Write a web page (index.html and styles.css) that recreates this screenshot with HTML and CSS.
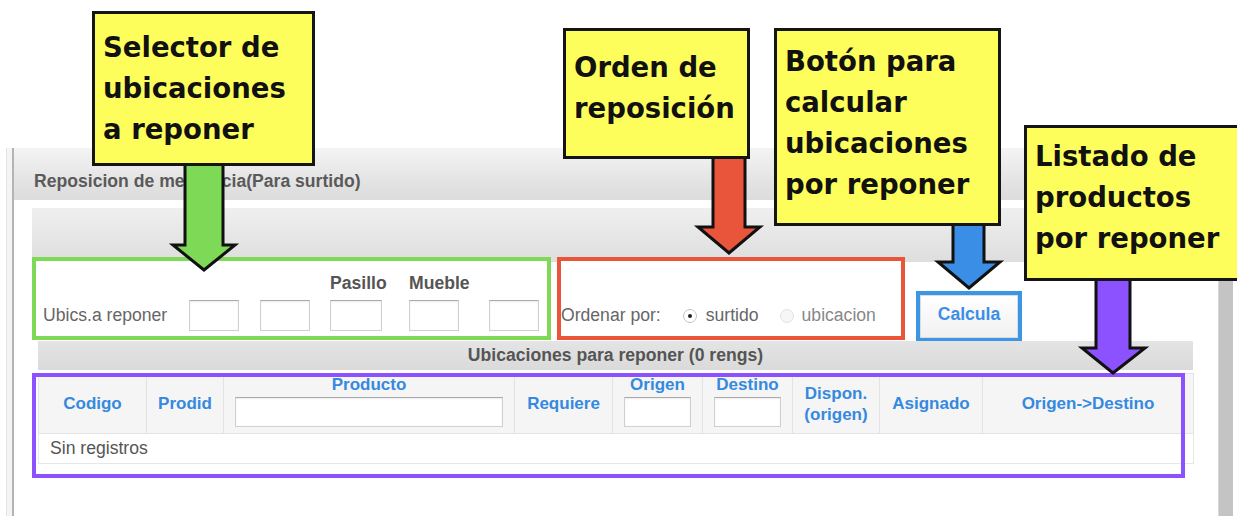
FILE: index.html
```html
<!DOCTYPE html>
<html lang="es">
<head>
    <meta charset="UTF-8">
    <title>Reposicion de mercancia</title>
    <link rel="stylesheet" href="styles.css">
</head>
<body>
    <div class="window">
        <div class="frame">
            <div class="win-title">Reposicion de mercancia(Para surtido)</div>
            <div class="win-body">
                <div class="content">
                    <div class="filter-panel">
                        <div class="filter-row">
                            <div class="hl hl-green ubics">
                                <span></span>
                                <span></span>
                                <span></span>
                                <span class="col-label">Pasillo</span>
                                <span class="col-label">Mueble</span>
                                <span></span>
                                <span class="ubics-label">Ubics.a reponer</span>
                                <input type="text">
                                <input type="text">
                                <input type="text" class="wide">
                                <input type="text">
                                <input type="text">
                            </div>
                            <div class="hl hl-red orden">
                                <span class="orden-label">Ordenar por:</span>
                                <span class="radio on"></span>
                                <span class="radio-text">surtido</span>
                                <span class="radio off"></span>
                                <span class="radio-text">ubicacion</span>
                            </div>
                            <div class="hl hl-blue calc">
                                <button type="button">Calcula</button>
                            </div>
                        </div>
                    </div>

                    <div class="list-panel">
                        <div class="list-title">Ubicaciones para reponer (0 rengs)</div>
                        <table class="grid">
                            <colgroup>
                                <col style="width:108px">
                                <col style="width:77px">
                                <col style="width:291px">
                                <col style="width:98px">
                                <col style="width:90px">
                                <col style="width:90px">
                                <col style="width:87px">
                                <col style="width:103px">
                                <col style="width:211px">
                            </colgroup>
                            <thead>
                                <tr>
                                    <th>Codigo</th>
                                    <th>Prodid</th>
                                    <th class="filter">Producto<input type="text" class="f-producto"></th>
                                    <th>Requiere</th>
                                    <th class="filter">Origen<input type="text" class="f-small"></th>
                                    <th class="filter">Destino<input type="text" class="f-small"></th>
                                    <th class="two-line">Dispon.<br>(origen)</th>
                                    <th>Asignado</th>
                                    <th>Origen-&gt;Destino</th>
                                </tr>
                            </thead>
                            <tbody>
                                <tr>
                                    <td colspan="9" class="empty">Sin registros</td>
                                </tr>
                            </tbody>
                        </table>
                        <div class="hl-purple"></div>
                    </div>
                </div>
                <div class="scrollbar"></div>
            </div>
        </div>
    </div>

    <!-- notas -->
    <svg class="arrow a-green" width="72" height="112" viewBox="0 0 72 112">
        <polygon points="17,0 55,0 55,82 67,82 36,107 5,82 17,82" />
    </svg>
    <svg class="arrow a-red" width="70" height="102" viewBox="0 0 70 102">
        <polygon points="19,0 51,0 51,72 66,72 35,98 4,72 19,72" />
    </svg>
    <svg class="arrow a-blue" width="70" height="70" viewBox="0 0 70 70">
        <polygon points="19,0 50,0 50,40 66,40 35,66 4,40 19,40" />
    </svg>
    <svg class="arrow a-purple" width="70" height="100" viewBox="0 0 70 100">
        <polygon points="18,0 52,0 52,71 67,71 35,96 4,71 18,71" />
    </svg>

    <div class="callout c1">Selector de<br>ubicaciones<br>a reponer</div>
    <div class="callout c2">Orden de<br>reposición</div>
    <div class="callout c3">Botón para<br>calcular<br>ubicaciones<br>por reponer</div>
    <div class="callout c4">Listado de<br>productos<br>por reponer</div>
</body>
</html>
```

FILE: styles.css
```css
body {
    margin: 0;
    background: white;
    font-family: "Liberation Sans", Arial, sans-serif;
    font-size: 17.6px;
    color: #555;
    overflow: hidden;
}
.window {
    margin: 148px 0 0 6px;
    width: 1228px;
    height: 368px;
    padding-left: 5px;
    border-left: 1px solid #e4e4e4;
    background: #f4f4f4;
    box-sizing: border-box;
}
.frame {
    height: 100%;
    background: white;
    border-left: 2px solid #b4b4b4;
}
.win-title {
    height: 52px;
    line-height: 66px;
    padding-left: 20px;
    font-weight: bold;
    color: #5a5a5a;
    background: linear-gradient(#f4f4f4, #e2e2e2 70%, #dcdcdc);
}
.win-body {
    display: flex;
    height: 316px;
}
.content {
    width: 1179px;
    padding: 8px 0 0 18px;
    box-sizing: border-box;
}
.scrollbar {
    width: 14px;
    margin-left: 25px;
    background: #c4c4c4;
    border-left: 1px solid #d8d8d8;
}

/* panel de filtros */
.filter-panel {
    background: linear-gradient(#efefef 0, #dedede 54px, white 54px);
    padding-top: 49px;
}
.filter-row {
    display: flex;
    align-items: flex-end;
    height: 83px;
}
.hl {
    border: 4px solid;
    box-sizing: border-box;
}
.hl-green {
    border-color: #7ed957;
    background: white;
}
.hl-red {
    border-color: #ea553a;
    background: white;
}
.hl-blue {
    border-color: #3d95e6;
    background: white;
}
.ubics {
    width: 519px;
    height: 83px;
    display: grid;
    grid-template-columns: 153px 71px 70px 79px 80px 58px;
    grid-template-rows: 22px 31px;
    row-gap: 6px;
    padding-top: 11px;
    align-items: center;
}
.col-label {
    font-weight: bold;
    color: #555;
}
.ubics-label {
    padding-left: 7px;
    color: #666;
}
input[type="text"] {
    width: 50px;
    height: 31px;
    border: 1px solid #d0d0d0;
    border-top-color: #aaa;
    box-shadow: inset 0 1px 2px rgba(0,0,0,0.08);
    box-sizing: border-box;
    padding: 0;
    margin: 0;
}
input.wide {
    width: 52px;
}
.orden {
    width: 348px;
    height: 83px;
    margin-left: 6px;
    display: flex;
    align-items: center;
    padding: 34px 0 0 0;
    color: #666;
}
.orden-label {
    margin-right: 22px;
}
.radio {
    width: 14px;
    height: 14px;
    border-radius: 50%;
    border: 1px solid #c4c4c4;
    box-sizing: border-box;
    position: relative;
    margin-right: 9px;
    background: white;
}
.radio.on::after {
    content: "";
    position: absolute;
    left: 4px;
    top: 4px;
    width: 4px;
    height: 4px;
    border-radius: 50%;
    background: #222;
}
.radio.off {
    border-color: #e2e2e2;
    background: #f6f6f6;
    margin-left: 21px;
    margin-right: 8px;
}
.radio-text {
    color: #666;
}
.radio.off + .radio-text {
    color: #888;
}
.calc {
    width: 106px;
    height: 51px;
    margin-left: 11px;
    margin-bottom: -2px;
}
.calc button {
    width: 100%;
    height: 100%;
    border: 1px solid #dcdcdc;
    background: linear-gradient(white, #f1f1f1);
    color: #3a8ee6;
    font-family: "Liberation Sans", Arial, sans-serif;
    font-weight: bold;
    font-size: 17.6px;
    padding: 0 0 4px 0;
}

/* listado */
.list-panel {
    position: relative;
    margin-left: 6px;
    width: 1155px;
    margin-top: 1px;
    padding-bottom: 15px;
}
.list-title {
    height: 29px;
    line-height: 29px;
    text-align: center;
    font-weight: bold;
    font-size: 17.6px;
    color: #555;
    background: linear-gradient(#e4e4e4, #dadada);
}
.grid {
    margin-top: 3px;
    width: 1155px;
    border-collapse: collapse;
    table-layout: fixed;
}
.grid th {
    height: 57px;
    background: #f5f5f5;
    border: 1px solid #e3e3e3;
    color: #3589df;
    font-size: 17px;
    font-weight: bold;
    padding: 0;
    vertical-align: middle;
}
.grid th.filter {
    line-height: 18px;
    vertical-align: top;
    padding-top: 2px;
}
.grid th.filter input {
    display: block;
    margin: 3px auto 0;
    height: 30px;
}
.f-producto {
    width: 268px !important;
}
.f-small {
    width: 67px !important;
}
.grid th.two-line {
    line-height: 21px;
}
.grid td.empty {
    height: 29px;
    padding: 0 0 0 11px;
    border: 1px solid #e6e6e6;
    color: #555;
}
.hl-purple {
    position: absolute;
    left: -6px;
    top: 32px;
    width: 1153px;
    height: 105px;
    border: 4px solid #8c52ff;
    box-sizing: border-box;
}

/* notas amarillas */
.callout {
    position: absolute;
    background: #fdfd5c;
    border: 3px solid #151515;
    box-sizing: border-box;
    font-family: "DejaVu Sans", sans-serif;
    font-weight: bold;
    font-size: 27.5px;
    line-height: 41px;
    color: #111;
    padding-left: 8px;
    white-space: nowrap;
    overflow: hidden;
}
.c1 {
    left: 92px;
    top: 11px;
    width: 223px;
    height: 155px;
    padding-top: 13px;
}
.c2 {
    left: 563px;
    top: 28px;
    width: 187px;
    height: 131px;
    padding-top: 16px;
}
.c3 {
    left: 774px;
    top: 28px;
    width: 227px;
    height: 198px;
    padding-top: 10px;
}
.c4 {
    left: 1024px;
    top: 125px;
    width: 222px;
    height: 156px;
    padding-top: 8px;
}
.arrow {
    position: absolute;
    overflow: visible;
}
.arrow polygon {
    stroke: #111;
    stroke-width: 3;
    stroke-linejoin: miter;
}
.a-green {
    left: 168px;
    top: 163px;
}
.a-green polygon {
    fill: #7ed957;
}
.a-red {
    left: 694px;
    top: 155px;
}
.a-red polygon {
    fill: #e9553b;
}
.a-blue {
    left: 934px;
    top: 222px;
}
.a-blue polygon {
    fill: #3a8ee6;
}
.a-purple {
    left: 1078px;
    top: 277px;
}
.a-purple polygon {
    fill: #8c52ff;
}
```
